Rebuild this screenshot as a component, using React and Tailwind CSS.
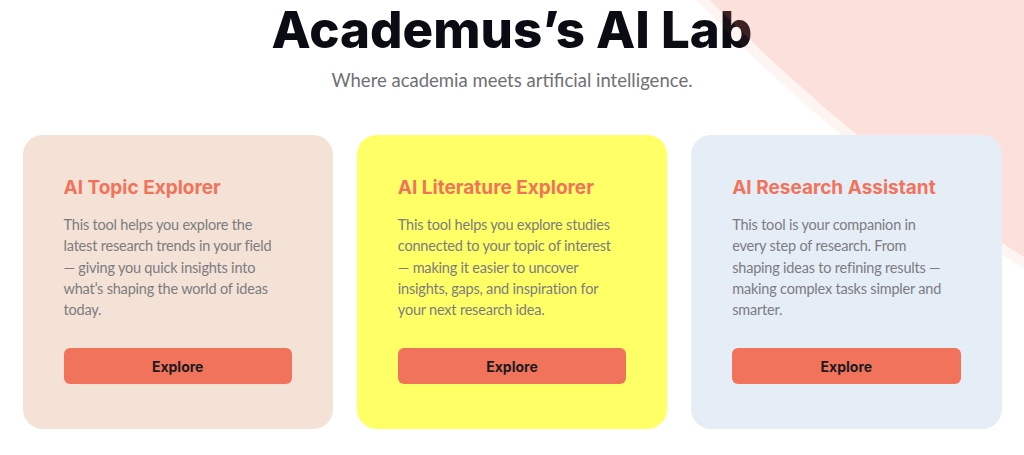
import React from "react";

const tools = [
  {
    title: "AI Topic Explorer",
    lines: [
      "This tool helps you explore the",
      "latest research trends in your field",
      "— giving you quick insights into",
      "what’s shaping the world of ideas",
      "today.",
    ],
    bg: "bg-[#f3e2d5]",
  },
  {
    title: "AI Literature Explorer",
    lines: [
      "This tool helps you explore studies",
      "connected to your topic of interest",
      "— making it easier to uncover",
      "insights, gaps, and inspiration for",
      "your next research idea.",
    ],
    bg: "bg-[#ffff66]",
  },
  {
    title: "AI Research Assistant",
    lines: [
      "This tool is your companion in",
      "every step of research. From",
      "shaping ideas to refining results —",
      "making complex tasks simpler and",
      "smarter.",
    ],
    bg: "bg-[#e5edf7]",
  },
];

const App = () => {
  return (
    <div className="relative h-[455px] w-full overflow-hidden bg-white font-['Inter',sans-serif]">
      {/* big pink blob, sits over the heading */}
      <svg
        className="pointer-events-none absolute left-0 top-0 z-10"
        width="1024"
        height="455"
        viewBox="0 0 1024 455"
      >
        <circle cx="2010" cy="-1268" r="1816" fill="rgba(242,115,91,0.22)" />
        <circle
          cx="2010"
          cy="-1268"
          r="1821"
          fill="none"
          stroke="rgba(242,115,91,0.07)"
          strokeWidth="10"
        />
      </svg>

      {/* Heading */}
      <div className="flex flex-col items-center">
        <h1 className="text-[51px] font-extrabold leading-[60px] text-[#0b0b14]">
          Academus’s AI Lab
        </h1>
        <p className="mt-[7px] font-['Lato',sans-serif] text-[18.5px] leading-[26px] text-[#6f6f74]">
          Where academia meets artificial intelligence.
        </p>
      </div>

      {/* Cards */}
      <div className="relative z-20 mx-auto mt-[42px] grid w-[979px] grid-cols-3 gap-[24px]">
        {tools.map((tool, i) => (
          <div
            key={i}
            className={`flex h-[294px] flex-col rounded-[20px] px-[41px] pt-[41px] ${tool.bg}`}
          >
            <h3 className="text-[19px] font-bold leading-[24px] text-[#f2735b]">
              {tool.title}
            </h3>
            <p className="mt-[14px] h-[108px] whitespace-nowrap font-['Lato',sans-serif] text-[14.5px] leading-[21.3px] tracking-[-0.2px] text-[#7c7c80]">
              {tool.lines.map((line, j) => (
                <React.Fragment key={j}>
                  {line}
                  {j < tool.lines.length - 1 && <br />}
                </React.Fragment>
              ))}
            </p>
            <button className="mt-[26px] h-[36px] w-full rounded-[6px] bg-[#f2735b] text-[14px] font-bold text-[#1b1b1f]">
              Explore
            </button>
          </div>
        ))}
      </div>
    </div>
  );
};

export default App;
